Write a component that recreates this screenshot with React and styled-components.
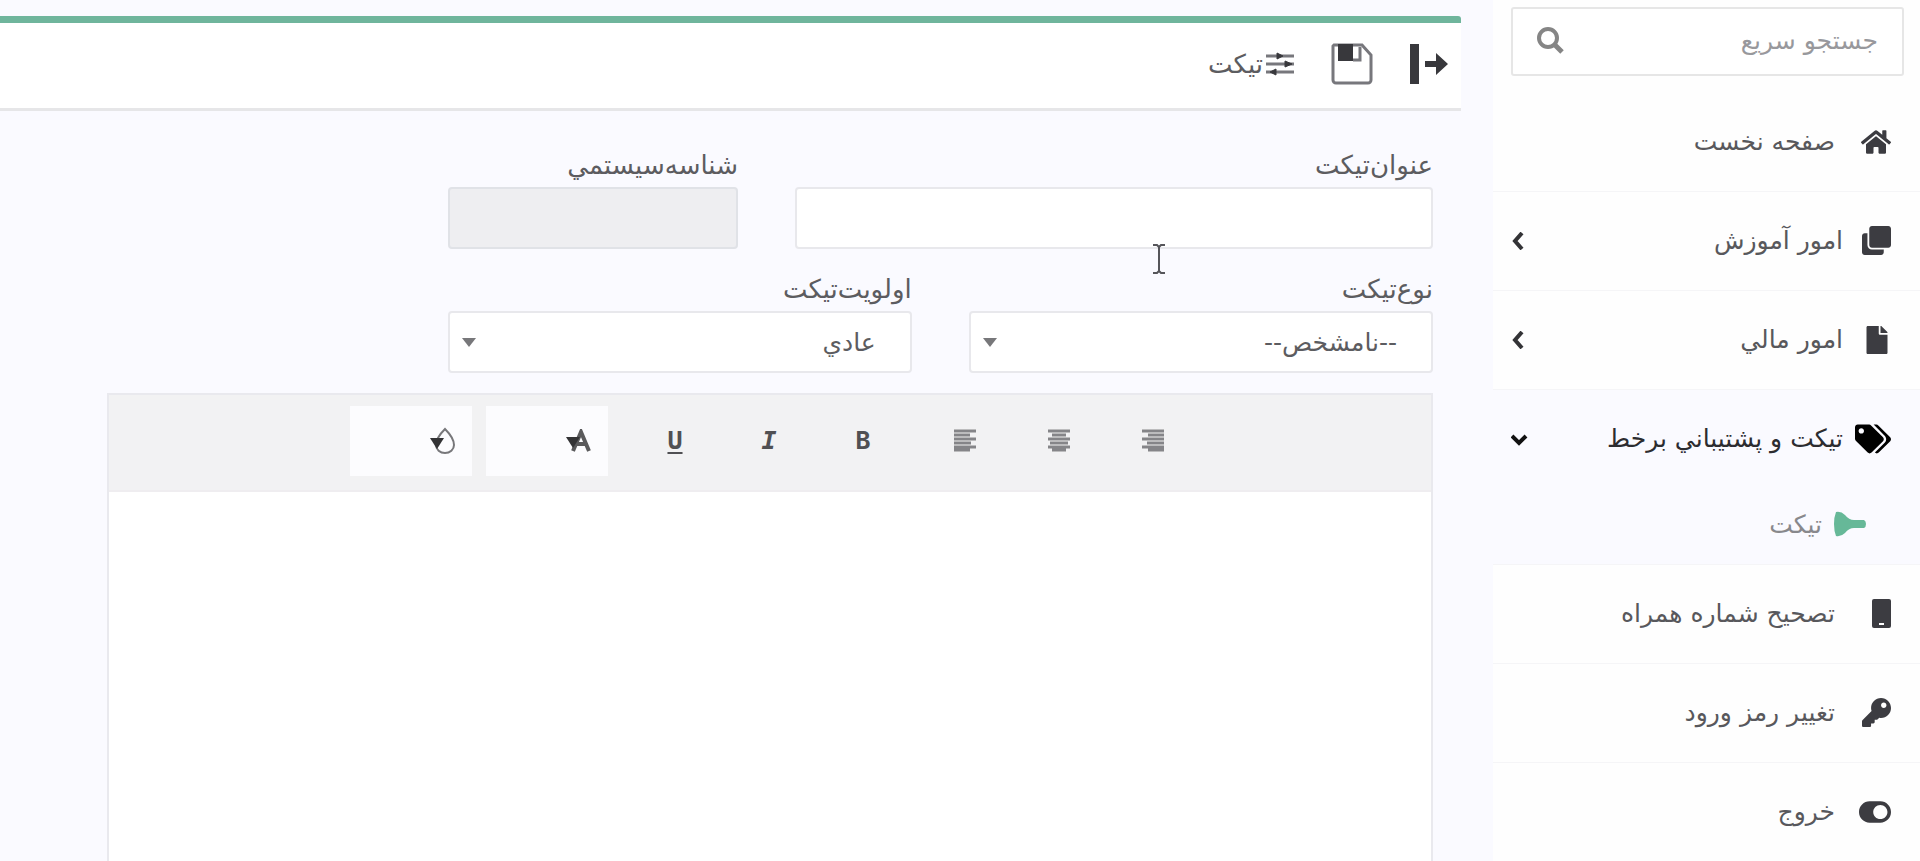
import styled, { createGlobalStyle, css } from 'styled-components'
import {
  FaHome,
  FaClone,
  FaFile,
  FaTags,
  FaKey,
  FaToggleOn,
} from 'react-icons/fa'

const GlobalStyle = createGlobalStyle`
  * {
    box-sizing: border-box;
  }

  body {
    margin: 0;
    background-color: #fafaff;
    color: #5c5c60;
    font-family: 'DejaVu Sans', sans-serif;
    font-size: 25px;
    overflow: hidden;
  }

  button,
  input,
  select {
    font: inherit;
    color: inherit;
  }
`

const Page = styled.div`
  display: flex;
  align-items: stretch;
  min-height: 100vh;
`

const Sidebar = styled.aside`
  flex: 0 0 427px;
  min-width: 0;
  background-color: #fefefe;
`

const SearchBox = styled.form`
  display: flex;
  align-items: center;
  height: 69px;
  margin: 7px 16px 17px 18px;
  padding: 0 24px 3px 23px;
  background-color: #fff;
  border: 2px solid #e6e6e6;
  border-radius: 3px;
`

const SearchInput = styled.input`
  flex: 1;
  min-width: 0;
  padding: 0;
  border: 0;
  outline: 0;
  background: transparent;

  &::placeholder {
    color: #98989c;
    opacity: 1;
  }
`

const SearchButton = styled.button`
  display: flex;
  padding: 0;
  border: 0;
  background: transparent;
  color: #858585;
`

const Menu = styled.ul`
  margin: 0;
  padding: 0;
  list-style: none;
`

const MenuItem = styled.li`
  border-bottom: 1px solid #f5f5f7;
  background-color: ${({ $active }) => ($active ? '#fafaff' : 'transparent')};
`

const MenuLink = styled.a`
  display: flex;
  align-items: center;
  height: 98px;
  padding: 0 29px 1px 18px;
  color: ${({ $active }) => ($active ? '#2c2c30' : '#58585c')};
  text-decoration: none;
`

const MenuIcon = styled.span`
  display: flex;
  flex: 0 0 ${({ $wide }) => ($wide ? 56 : 48)}px;
  color: ${({ $active }) => ($active ? '#000' : '#3c3c41')};
`

const MenuText = styled.span`
  flex: 1;
`

const SubLink = styled.a`
  display: flex;
  align-items: center;
  gap: 11px;
  height: 76px;
  padding: 0 53px 4px 18px;
  color: #88888c;
  text-decoration: none;
`

const Main = styled.main`
  display: flex;
  flex: 1;
  flex-direction: column;
  min-width: 0;
  padding: 16px 32px 0 0;
`

const Header = styled.header`
  display: flex;
  align-items: center;
  height: 95px;
  padding: 0 12px 3px;
  background-color: #fff;
  border-top: 7px solid #6fb59c;
  border-bottom: 3px solid #e6e6e8;
  border-top-right-radius: 3px;
`

const HeaderButton = styled.button`
  display: flex;
  padding: 0;
  margin-left: 36px;
  border: 0;
  background: transparent;
  color: #38383c;
`

const Title = styled.h1`
  display: flex;
  align-items: center;
  gap: 2px;
  margin: 0;
  font-size: 26px;
  font-weight: 400;
`

const Form = styled.form`
  display: flex;
  flex: 1;
  flex-direction: column;
  padding: 38px 28px 0 0;
`

const Fields = styled.div`
  display: grid;
  grid-template-columns: repeat(8, 1fr);
  column-gap: 57px;
  row-gap: 24px;
  margin-left: 100px;
`

const Field = styled.div`
  position: relative;
  display: flex;
  flex-direction: column;
  grid-column: span ${({ $span }) => $span};
`

const Label = styled.label`
  height: 38px;
  font-size: 26px;
  line-height: 33px;
`

const control = css`
  width: 100%;
  height: 62px;
  padding: 0 34px;
  background-color: #fff;
  border: 2px solid #e8e8ec;
  border-radius: 4px;
  outline: 0;
`

const TextInput = styled.input`
  ${control}

  &:disabled {
    background-color: #eeeef1;
    border-color: #e0e2e7;
  }
`

const SelectWrap = styled.div`
  position: relative;
`

const Select = styled.select`
  ${control}
  appearance: none;
`

const SelectCaret = styled.span`
  position: absolute;
  top: 27px;
  left: 14px;
  border: 7px solid transparent;
  border-top: 9px solid #77777a;
  border-bottom: 0;
  pointer-events: none;
`

const TextCursor = styled.svg`
  position: absolute;
  top: 94px;
  left: 56%;
  pointer-events: none;
`

const Editor = styled.section`
  display: flex;
  flex: 1;
  flex-direction: column;
  margin: 20px 0 0 107px;
  border: 2px solid #e9e9ee;
  border-bottom: 0;
`

const Toolbar = styled.div`
  display: flex;
  align-items: center;
  height: 97px;
  padding: 0 231px 4px 0;
  background-color: #f2f2f3;
  border-bottom: 2px solid #efedf0;
`

const ToolGroup = styled.div`
  display: flex;
  margin-left: 8px;
`

const ToolButton = styled.button`
  display: flex;
  align-items: center;
  justify-content: center;
  width: 94px;
  height: 70px;
  padding: 0;
  border: 0;
  background: transparent;
  color: #505053;
  font-family: 'DejaVu Sans Mono', monospace;
  font-weight: 700;
  font-style: ${({ $italic }) => ($italic ? 'italic' : 'normal')};
  text-decoration: ${({ $underline }) => ($underline ? 'underline' : 'none')};
  text-decoration-thickness: 2px;
  text-underline-offset: 3px;
`

const Pickers = styled.div`
  display: flex;
  gap: 14px;
  margin-right: 12px;
`

const Picker = styled.button`
  display: flex;
  align-items: center;
  width: 122px;
  height: 70px;
  padding: 0 16px;
  border: 0;
  background-color: #fcfcfe;
  color: #505053;
`

const EditorBody = styled.div`
  flex: 1;
  background-color: #fff;
  outline: 0;
`

const SearchIcon = () => (
  <svg width="28" height="28" viewBox="0 0 28 28" fill="none" stroke="currentColor">
    <circle cx="12" cy="12" r="9" strokeWidth="4" />
    <path d="M18.5 18.5L26 26" strokeWidth="5" />
  </svg>
)

const ExitIcon = () => (
  <svg width="40" height="40" viewBox="0 0 40 40" fill="currentColor">
    <path d="M1 0h9v40H1zM16 17h11V9l12 11-12 11v-8H16z" />
  </svg>
)

const SaveIcon = () => (
  <svg width="42" height="42" viewBox="0 0 42 42" fill="none">
    <path
      d="M3 2h28l9 10v25a3 3 0 0 1-3 3H5a3 3 0 0 1-3-3V3z"
      stroke="#77777c"
      strokeWidth="3"
    />
    <path d="M7 1h15v17H7z" fill="#38383c" />
    <path d="M22 17h7V4" stroke="#77777c" strokeWidth="3" />
  </svg>
)

const SlidersIcon = () => (
  <svg width="30" height="24" viewBox="0 0 30 24">
    <path d="M1 4h28M1 12h28M1 20h28" stroke="#77777c" strokeWidth="3" />
    <path
      d="M12 1l6 3-6 3zM20 9l7 3-7 3zM11 17l-6 3 6 3z"
      fill="#38383c"
      stroke="#38383c"
    />
  </svg>
)

const PhoneIcon = () => (
  <svg width="19" height="29" viewBox="0 0 19 29">
    <rect width="19" height="29" rx="2" fill="currentColor" />
    <rect x="7" y="24" width="5" height="2" fill="#fff" />
  </svg>
)

const TorchIcon = () => (
  <svg width="34" height="26" viewBox="0 0 34 26" fill="#66b898">
    <path d="M3 1Q8 0 12 4Q16 9 21 9H31Q33 10 33 13Q33 16 31 17H21Q16 17 12 22Q8 26 3 25Q1 20 1 13Q1 6 3 1z" />
  </svg>
)

const ChevronIcon = ({ open }) => (
  <svg
    width="18"
    height="18"
    viewBox="0 0 18 18"
    fill="none"
    stroke={open ? '#111' : '#333336'}
    strokeWidth="4"
  >
    <path d={open ? 'M1 6l7 7 7-7' : 'M11 1L4 9l7 8'} />
  </svg>
)

const alignPaths = {
  right: 'M0 2h22M6 6h16M0 10h22M5 14h17M0 18h22M6 21h16',
  center: 'M0 2h22M4 6h14M0 10h22M2 14h18M0 18h22M4 21h14',
  left: 'M0 2h22M0 6h16M0 10h22M0 14h17M0 18h22M0 21h16',
}

const AlignIcon = ({ type }) => (
  <svg width="22" height="24" viewBox="0 0 22 24">
    <path d={alignPaths[type]} stroke="#858588" strokeWidth="3" />
  </svg>
)

const TextColorIcon = () => (
  <svg width="26" height="24" viewBox="0 0 26 24">
    <path d="M7 22L15 3l8 19M10 15h10" fill="none" stroke="#5a5a5c" strokeWidth="4" />
    <path d="M0 8h14L7 19z" fill="#333335" />
  </svg>
)

const FillColorIcon = () => (
  <svg width="26" height="30" viewBox="0 0 26 30">
    <path
      d="M15 3Q6 12 6 19a9 8 0 0 0 18 0Q24 12 15 3z"
      fill="none"
      stroke="#77777a"
      strokeWidth="2"
    />
    <path d="M0 12h14L7 23z" fill="#333335" />
  </svg>
)

const menu = [
  { text: 'صفحه نخست', icon: <FaHome size={30} /> },
  { text: 'امور آموزش', icon: <FaClone size={29} />, children: [] },
  { text: 'امور مالي', icon: <FaFile size={28} />, children: [] },
  {
    text: 'تيکت و پشتيباني برخط',
    icon: <FaTags size={36} />,
    active: true,
    children: ['تيکت'],
  },
  { text: 'تصحيح شماره همراه', icon: <PhoneIcon /> },
  { text: 'تغيير رمز ورود', icon: <FaKey size={29} /> },
  { text: 'خروج', icon: <FaToggleOn size={32} /> },
]

const SidebarMenu = () => (
  <Menu>
    {menu.map(({ text, icon, active, children }) => (
      <MenuItem key={text} $active={active}>
        <MenuLink href="#" $active={active}>
          <MenuIcon $wide={!children} $active={active}>
            {icon}
          </MenuIcon>
          <MenuText>{text}</MenuText>
          {children && <ChevronIcon open={active} />}
        </MenuLink>
        {active &&
          children.map((child) => (
            <SubLink key={child} href="#">
              <TorchIcon />
              {child}
            </SubLink>
          ))}
      </MenuItem>
    ))}
  </Menu>
)

const SelectField = ({ id, label, option, span }) => (
  <Field $span={span}>
    <Label htmlFor={id}>{label}</Label>
    <SelectWrap>
      <Select id={id}>
        <option>{option}</option>
      </Select>
      <SelectCaret />
    </SelectWrap>
  </Field>
)

const TicketForm = () => (
  <Form>
    <Fields>
      <Field $span={4}>
        <Label htmlFor="title">عنوان‌تيکت</Label>
        <TextInput id="title" type="text" />
        <TextCursor width="14" height="32" viewBox="0 0 14 32">
          <path
            d="M1 2h4l2 2 2-2h4M7 4v24M1 30h4l2-2 2 2h4"
            fill="none"
            stroke="#55555a"
            strokeWidth="2"
          />
        </TextCursor>
      </Field>
      <Field $span={2}>
        <Label htmlFor="system-id">شناسه‌سيستمي</Label>
        <TextInput id="system-id" type="text" disabled />
      </Field>
      <SelectField id="type" label="نوع‌تيکت" option="--نامشخص--" span={3} />
      <SelectField id="priority" label="اولويت‌تيکت" option="عادي" span={3} />
    </Fields>
    <Editor>
      <Toolbar>
        <ToolGroup>
          {['right', 'center', 'left'].map((type) => (
            <ToolButton key={type} type="button" aria-label={type}>
              <AlignIcon type={type} />
            </ToolButton>
          ))}
        </ToolGroup>
        <ToolGroup>
          <ToolButton type="button">B</ToolButton>
          <ToolButton type="button" $italic>
            I
          </ToolButton>
          <ToolButton type="button" $underline>
            U
          </ToolButton>
        </ToolGroup>
        <Pickers>
          <Picker type="button" aria-label="رنگ متن">
            <TextColorIcon />
          </Picker>
          <Picker type="button" aria-label="رنگ زمينه">
            <FillColorIcon />
          </Picker>
        </Pickers>
      </Toolbar>
      <EditorBody contentEditable suppressContentEditableWarning />
    </Editor>
  </Form>
)

const App = () => (
  <>
    <GlobalStyle />
    <Page dir="rtl" lang="fa">
      <Sidebar>
        <SearchBox>
          <SearchInput
            type="text"
            placeholder="جستجو سريع"
            aria-label="جستجو سريع"
          />
          <SearchButton type="button" aria-label="جستجو">
            <SearchIcon />
          </SearchButton>
        </SearchBox>
        <SidebarMenu />
      </Sidebar>
      <Main>
        <Header>
          <HeaderButton type="button" aria-label="خروج">
            <ExitIcon />
          </HeaderButton>
          <HeaderButton type="button" aria-label="ذخيره">
            <SaveIcon />
          </HeaderButton>
          <Title>
            <SlidersIcon />
            تيکت
          </Title>
        </Header>
        <TicketForm />
      </Main>
    </Page>
  </>
)

export default App
